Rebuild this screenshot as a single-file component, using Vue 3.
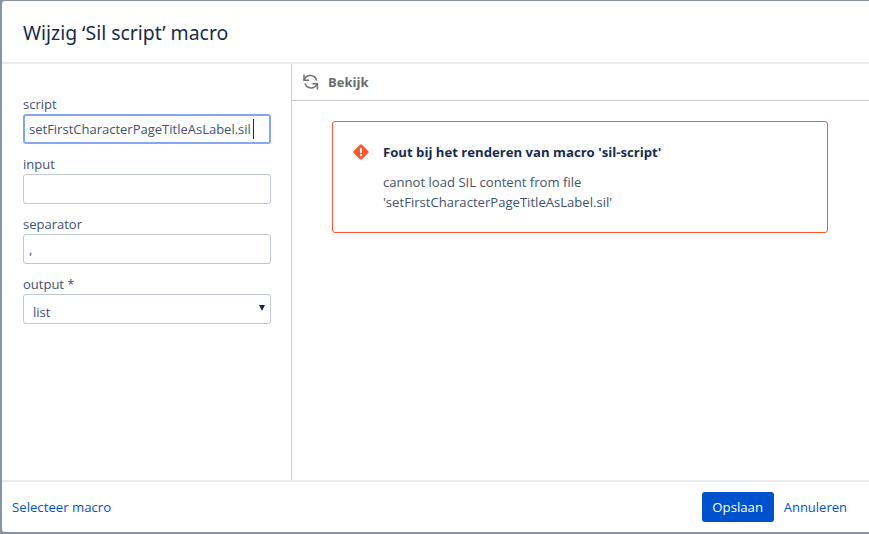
<script setup>
const fields = [
  { label: 'input', value: '' },
  { label: 'separator', value: ',' },
]
</script>

<template>
  <div class="backdrop">
    <div class="dialog">
      <header class="head"><h2>Wijzig ‘Sil script’ macro</h2></header>
      <div class="body">
        <aside class="side">
          <label class="lab">script</label>
          <div class="box focus"><span class="val">setFirstCharacterPageTitleAsLabel.sil</span><i class="caret"></i></div>
          <template v-for="f in fields" :key="f.label">
            <label class="lab">{{ f.label }}</label>
            <div class="box"><span class="val">{{ f.value }}</span></div>
          </template>
          <label class="lab">output *</label>
          <div class="box sel"><span>list</span><i class="arrow"></i></div>
        </aside>
        <main class="main">
          <div class="bar">
            <svg width="18" height="18" viewBox="0 0 18 18" fill="none" stroke="#707070" stroke-width="1.5">
              <path d="M1.2 7 A6.4 6.4 0 0 1 13.6 7.6" />
              <path d="M1 1.6 V7.2 H6" />
              <path d="M14 11 A6.4 6.4 0 0 1 2 10.6" />
              <path d="M14.4 16.4 V10.8 H9.4" />
            </svg>
            <span>Bekijk</span>
          </div>
          <div class="content">
            <div class="error">
              <svg class="ic" width="16" height="16" viewBox="0 0 16 16">
                <path d="M6.7 1 a1.8 1.8 0 0 1 2.6 0 l5.7 5.7 a1.8 1.8 0 0 1 0 2.6 l-5.7 5.7 a1.8 1.8 0 0 1 -2.6 0 l-5.7 -5.7 a1.8 1.8 0 0 1 0 -2.6 z" fill="#ff5630" />
                <rect x="7" y="3.8" width="2" height="5.4" rx="1" fill="#fff" />
                <circle cx="8" cy="11.2" r="1.1" fill="#fff" />
              </svg>
              <div class="msg">
                <h3>Fout bij het renderen van macro 'sil-script'</h3>
                <p>cannot load SIL content from file<br>'setFirstCharacterPageTitleAsLabel.sil'</p>
              </div>
            </div>
          </div>
        </main>
      </div>
      <footer class="foot">
        <a class="link">Selecteer macro</a>
        <div class="acts">
          <button class="save">Opslaan</button>
          <a class="link cancel">Annuleren</a>
        </div>
      </footer>
    </div>
  </div>
</template>

<style>
html, body { margin: 0; padding: 0; overflow: hidden; }
</style>

<style scoped>
.backdrop {
  width: 869px; height: 534px; box-sizing: border-box;
  padding: 1px 0 2px 2px; background: #8993a4;
  font-family: "Open Sans", "Noto Sans", sans-serif; font-size: 13px; color: #172b4d;
}
.dialog { height: 100%; background: #fff; display: flex; flex-direction: column; border-radius: 3px 0 0 3px; }
.head { height: 61px; box-sizing: content-box; flex: none; border-bottom: 2px solid #ebecf0; display: flex; align-items: center; padding-left: 21px; }
h2 { margin: 2px 0 0; font-size: 19.4px; font-weight: 400; color: #172b4d; font-family: "Noto Sans", sans-serif; }
.body { flex: 1; display: flex; min-height: 0; }
.side { width: 290px; flex: none; box-sizing: border-box; border-right: 1px solid #ccc; padding: 30px 20px 0 21px; }
.lab { display: block; height: 20px; line-height: 20px; font-size: 13px; color: #42526e; }
.box { height: 30px; box-sizing: border-box; border: 1px solid #c1c7d0; border-radius: 3px; margin-bottom: 10px; padding: 0 4px 0 5px; display: flex; align-items: center; color: #42526e; background: #fff; }
.val { font-size: 13px; line-height: 28px; }
.focus { border: 2px solid #85a9f0; padding-left: 4px; }
.caret { width: 1px; height: 20px; background: #172b4d; margin-left: 2px; }
.sel { position: relative; padding-left: 9px; }
.sel span { position: relative; top: 3px; }
.arrow { position: absolute; right: 5px; top: 10px; width: 0; height: 0; border-left: 3px solid transparent; border-right: 3px solid transparent; border-top: 6px solid #172b4d; }
.main { flex: 1; display: flex; flex-direction: column; min-width: 0; }
.bar { height: 36px; flex: none; border-bottom: 1px solid #ccc; display: flex; align-items: center; padding-left: 11px; gap: 7px; font-weight: 700; color: #6b6b6b; font-size: 13px; }
.content { padding: 20px 40px; }
.error { width: 496px; height: 112px; box-sizing: border-box; border: 1px solid #ff5630; border-radius: 3px; padding: 20px 20px 0 20px; display: flex; gap: 14px; }
.ic { margin-top: 2px; flex: none; }
h3 { margin: 0; font-size: 13.15px; line-height: 20px; font-weight: 700; color: #172b4d; }
p { margin: 10px 0 0; font-size: 13.1px; line-height: 20px; color: #42526e; }
.foot { height: 50px; flex: none; border-top: 2px solid #ebecf0; display: flex; align-items: center; justify-content: space-between; padding: 0 22px 0 10px; }
.acts { display: flex; align-items: center; gap: 10px; }
.link { color: #0052cc; font-size: 13.2px; }
.cancel { font-size: 13px; }
.save { width: 72px; height: 30px; border: 0; border-radius: 3px; background: #0052cc; color: #fff; font: 13.2px "Open Sans", sans-serif; padding: 0; }
</style>
